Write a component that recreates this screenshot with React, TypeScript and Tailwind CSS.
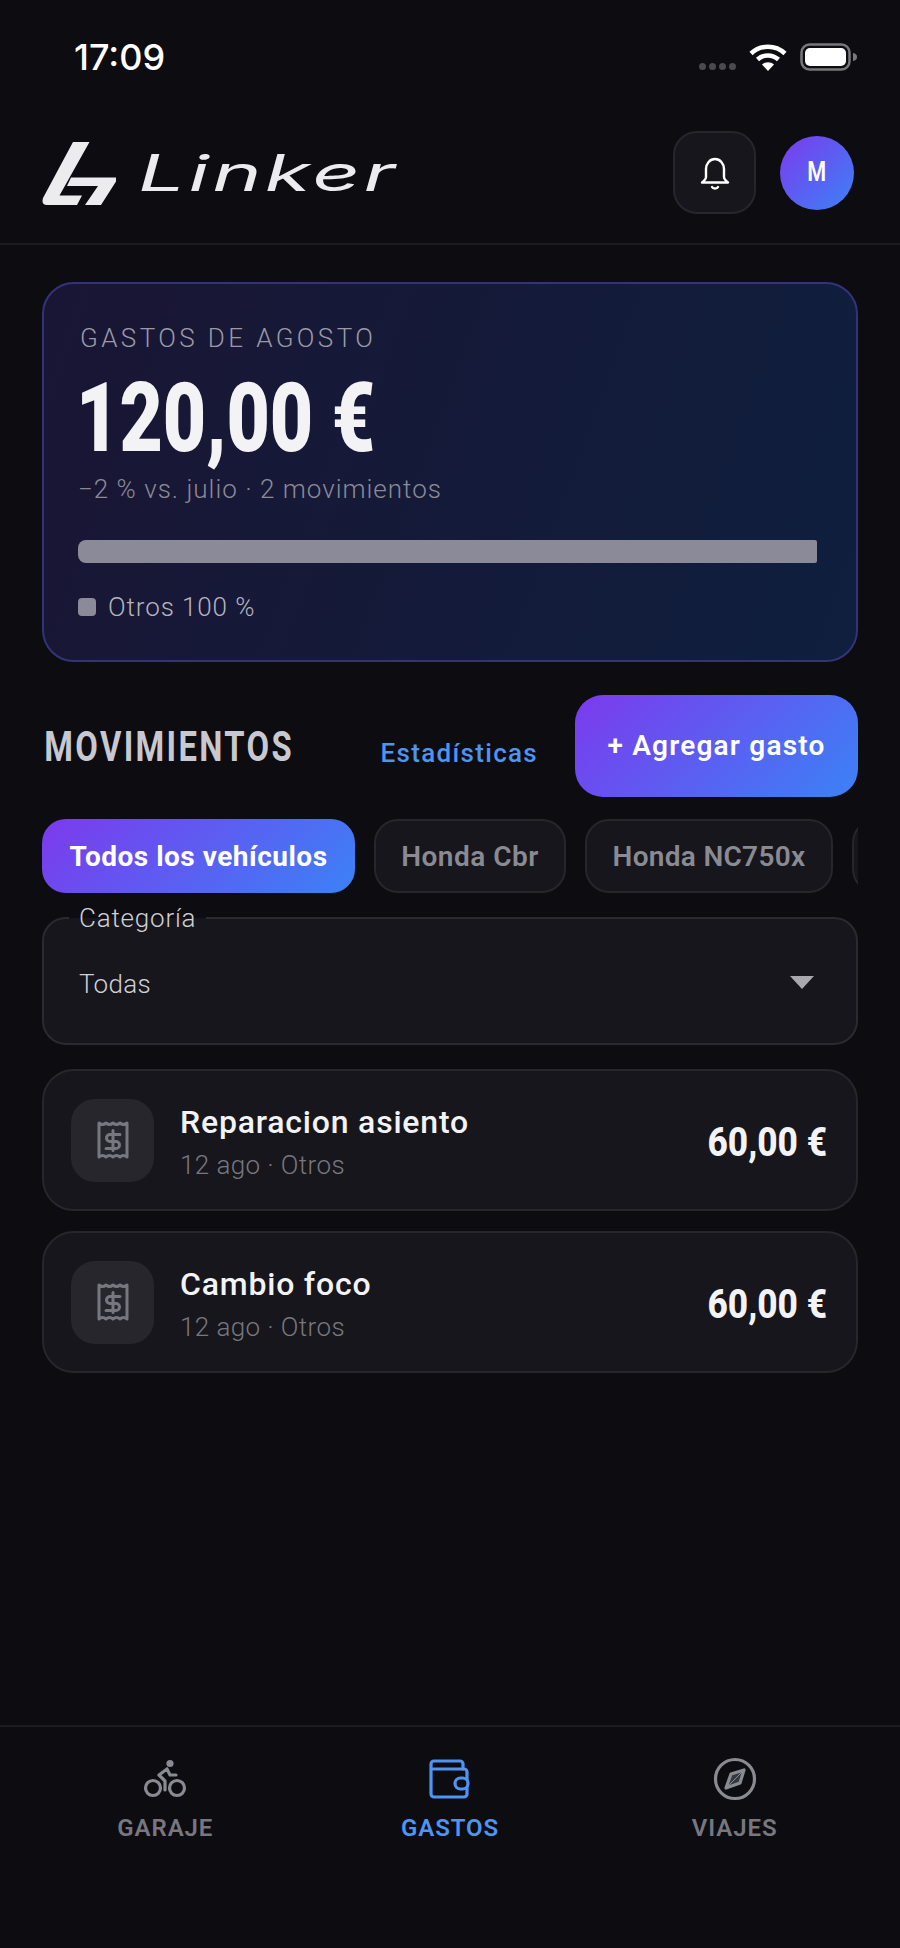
import React from "react";

function Wifi() {
  return (
    <svg width="38" height="28" viewBox="0 0 38 28" fill="none">
      <path d="M2 10.500C11.500 1.500 26.500 1.500 36 10.500" stroke="#fff" strokeWidth="4.500" />
      <path d="M8.500 16.500C14.500 11 23.500 11 29.500 16.500" stroke="#fff" strokeWidth="4.500" />
      <path d="M13 21.500C16.500 18.500 21.500 18.500 25 21.500L19 28Z" fill="#fff" />
    </svg>
  );
}

function Battery() {
  return (
    <svg width="58" height="28" viewBox="0 0 58 28" fill="none">
      <rect x="1.500" y="1.500" width="48" height="25" rx="8" stroke="#77777c" strokeWidth="2.500" />
      <rect x="5" y="5" width="41" height="18" rx="5" fill="#fff" />
      <path d="M53 10c3 .6 4 2 4 4s-1 3.400-4 4z" fill="#77777c" />
    </svg>
  );
}

function Bell() {
  return (
    <svg width="32" height="36" viewBox="0 0 32 36" fill="none" stroke="#fff" strokeWidth="2.400" strokeLinejoin="round" strokeLinecap="round">
      <path d="M7 14a9 10 0 0 1 18 0v8c0 2 1.500 3.500 4 5.500H3c2.500-2 4-3.500 4-5.500z" />
      <path d="M13 32c1 2 5 2 6 0" />
    </svg>
  );
}

function Logo() {
  return (
    <svg width="76" height="66" viewBox="12 20 76 66" fill="#ececee">
      <path d="M43 22H59.500L29.500 75.500H52L47 85H17Q11 85 13 78Z" />
      <path d="M41 57.500H86V61.500L71 85H55L68 66H37Z" />
    </svg>
  );
}

function Receipt() {
  return (
    <svg width="32" height="38" viewBox="0 0 32 38" fill="none" stroke="#77777f" strokeWidth="3" strokeLinejoin="round" strokeLinecap="round">
      <path d="M2 2c2.300 2 4.700 2 7 0 2.300 2 4.700 2 7 0 2.300 2 4.700 2 7 0 2.300 2 4.700 2 7 0v34c-2.300-2-4.700-2-7 0-2.300-2-4.700-2-7 0-2.300-2-4.700-2-7 0-2.300-2-4.700-2-7 0z" />
      <path d="M23 13.500h-10a3.500 3.500 0 0 0 0 7h6a3.500 3.500 0 0 1 0 7h-10M16 9.500v20" />
    </svg>
  );
}

function Bike() {
  return (
    <svg width="44" height="40" viewBox="0 0 44 40" fill="none" stroke="#8a8a92" strokeWidth="3.200" strokeLinecap="round" strokeLinejoin="round">
      <circle cx="27" cy="4.500" r="3.600" fill="#8a8a92" stroke="none" />
      <circle cx="10" cy="29" r="7.500" />
      <circle cx="34" cy="29" r="7.500" />
      <path d="M24 10l-8 6 6 6v9M24 10l3 6h6" />
    </svg>
  );
}

function WalletIcon() {
  return (
    <svg width="42" height="40" viewBox="0 0 42 40" fill="none" stroke="#4f94f3" strokeWidth="3.200" strokeLinejoin="round">
      <path d="M5 2h26a3 3 0 0 1 3 3v5h1a3 3 0 0 1 3 3v22a3 3 0 0 1-3 3H5a3 3 0 0 1-3-3V5a3 3 0 0 1 3-3z" />
      <path d="M2 10h33" />
      <rect x="26" y="19" width="13" height="11" rx="5.500" fill="#0c0c11" />
    </svg>
  );
}

function Compass() {
  return (
    <svg width="44" height="44" viewBox="0 0 44 44" fill="none" stroke="#8a8a92" strokeWidth="3.200" strokeLinejoin="round">
      <circle cx="22" cy="22" r="19.500" />
      <path d="M31 13l-4 13-14 5 5-14z" fill="#8a8a92" fillOpacity="0.35" />
      <path d="M31 13L13 31" strokeWidth="1" />
    </svg>
  );
}

function Row({ title }: { title: string }) {
  return (
    <div className="h-[142px] rounded-[32px] border-2 border-[#26262c] bg-[#16161c] pl-[27px] pr-[29px] flex items-center">
      <div className="w-[83px] h-[83px] rounded-[24px] bg-[#26262c] flex items-center justify-center shrink-0">
        <Receipt />
      </div>
      <div className="ml-[26px] flex-1 pt-[4px]">
        <div className="text-[32px] leading-[40px] font-medium tracking-[0.8px] text-[#f3f3f6]">{title}</div>
        <div className="text-[26px] leading-[34px] mt-[6px] font-light tracking-[0.4px] text-[#77777f]">12 ago · Otros</div>
      </div>
      <div className="text-[41px] leading-[50px] font-extrabold text-[#f3f3f6] origin-right scale-x-[0.86] pt-[3px]">60,00 €</div>
    </div>
  );
}

function NavItem({ icon, label, active }: { icon: React.ReactNode; label: string; active?: boolean }) {
  return (
    <div className="flex-1 flex flex-col items-center">
      <div className="h-[44px] flex items-center justify-center">{icon}</div>
      <div className={`mt-[12px] text-[24px] leading-[30px] font-semibold tracking-[0.9px] ${active ? "text-[#4f94f3]" : "text-[#77777f]"}`}>{label}</div>
    </div>
  );
}

export default function App() {
  return (
    <div className="w-[900px] min-h-[1948px] bg-[#0c0c11] flex flex-col font-['Roboto',sans-serif] overflow-hidden">
      <div className="h-[114px] px-[42px] pt-[37px] flex items-start justify-between">
        <div className="pl-[32px] font-['Inter',sans-serif] text-[36px] leading-[40px] font-medium text-white">17:09</div>
        <div className="flex items-start pt-[6px]">
          <div className="flex gap-[3px] mt-[20px] mr-[13px]">
            <div className="w-[7px] h-[7px] rounded-full bg-[#4a4a50]" />
            <div className="w-[7px] h-[7px] rounded-full bg-[#4a4a50]" />
            <div className="w-[7px] h-[7px] rounded-full bg-[#4a4a50]" />
            <div className="w-[7px] h-[7px] rounded-full bg-[#4a4a50]" />
          </div>
          <Wifi />
          <div className="ml-[13px]"><Battery /></div>
        </div>
      </div>

      <div className="h-[131px] px-[42px] pb-[12px] border-b-2 border-[#1c1c22] flex items-center justify-between">
        <div className="flex items-center">
          <Logo />
          <span className="ml-[20px] inline-block origin-left scale-x-[1.67] font-['Inter',sans-serif] italic text-[50px] leading-[60px] font-normal tracking-[2px] text-[#ececee]">Linker</span>
        </div>
        <div className="flex items-center gap-[24px] pr-[4px]">
          <div className="w-[83px] h-[83px] rounded-[24px] bg-[#16161c] border-2 border-[#26262c] flex items-center justify-center"><Bell /></div>
          <div className="w-[74px] h-[74px] rounded-full bg-linear-[135deg,#7c3aed,#3b82f6] flex items-center justify-center text-white">
            <span className="inline-block scale-x-[0.8] text-[27px] font-semibold">M</span>
          </div>
        </div>
      </div>

      <div className="flex-1 px-[42px] pt-[37px]">
        <div className="h-[380px] rounded-[32px] border-2 border-[#33337a] bg-linear-[110deg,#1a1534,#0f1f3e] pl-[34px] pr-[39px] pt-[38px]">
          <div className="pl-[2px] text-[26px] leading-[32px] font-light tracking-[3.4px] text-[#9a9aa6]">GASTOS DE AGOSTO</div>
          <div className="mt-[16px] -ml-[2px] origin-left scale-x-[0.78] text-[96px] leading-[96px] font-black text-[#f3f3f6]">120,00 €</div>
          <div className="mt-[6px] text-[26px] leading-[34px] font-light text-[#8a8a94] tracking-[1px]">−2 % vs. julio · 2 movimientos</div>
          <div className="mt-[34px] h-[23px] rounded-l-[8px] rounded-r-[2px] bg-[#8a8a98]" />
          <div className="mt-[27px] flex items-center gap-[12px]">
            <div className="w-[18px] h-[18px] rounded-[4px] bg-[#8a8a98]" />
            <div className="text-[26px] leading-[34px] font-light tracking-[0.9px] text-[#b4b4bc]">Otros 100 %</div>
          </div>
        </div>

        <div className="mt-[33px] flex items-center justify-between">
          <div className="pl-[3px] origin-left scale-x-[0.78] text-[42px] font-bold tracking-[3px] text-[#c8c8d0]">MOVIMIENTOS</div>
          <div className="flex items-center gap-[37px]">
            <div className="pt-[14px] text-[26px] font-medium tracking-[1.3px] text-[#4f94f3]">Estadísticas</div>
            <div className="w-[283px] h-[102px] rounded-[28px] bg-linear-[135deg,#7c3aed,#3b82f6] flex items-center justify-center text-[28px] font-semibold tracking-[1.2px] text-white">+ Agregar gasto</div>
          </div>
        </div>

        <div className="mt-[22px] flex gap-[19px] overflow-hidden">
          <div className="shrink-0 w-[313px] h-[74px] pt-[2px] rounded-[24px] bg-linear-[135deg,#7c3aed,#3b82f6] flex items-center justify-center text-[28px] font-bold tracking-[0.5px] text-white">Todos los vehículos</div>
          <div className="shrink-0 w-[192px] h-[74px] pt-[2px] rounded-[24px] bg-[#16161c] border-2 border-[#26262c] flex items-center justify-center text-[28px] font-semibold tracking-[0.5px] text-[#8a8a92]">Honda Cbr</div>
          <div className="shrink-0 w-[248px] h-[74px] pt-[2px] rounded-[24px] bg-[#16161c] border-2 border-[#26262c] flex items-center justify-center text-[28px] font-semibold tracking-[0.3px] text-[#8a8a92]">Honda NC750x</div>
          <div className="shrink-0 w-[200px] h-[74px] rounded-[24px] bg-[#16161c] border-2 border-[#26262c]" />
        </div>

        <div className="relative mt-[24px] h-[128px] rounded-[24px] border-2 border-[#2a2a30] bg-[#16161c] pl-[35px] pr-[42px] pt-[2px] flex items-center justify-between">
          <div className="absolute left-[25px] -top-[18px] px-[10px] bg-linear-to-b from-[#0c0c11] from-50% to-[#16161c] to-50% text-[26px] leading-[34px] font-light tracking-[0.8px] text-[#d0d0d6]">Categoría</div>
          <div className="pt-[3px] text-[26px] leading-[34px] font-light tracking-[0.3px] text-[#d0d0d6]">Todas</div>
          <div className="w-0 h-0 border-l-[12px] border-r-[12px] border-t-[13px] border-l-transparent border-r-transparent border-t-[#a8a8ae]" />
        </div>

        <div className="mt-[24px] flex flex-col gap-[20px]">
          <Row title="Reparacion asiento" />
          <Row title="Cambio foco" />
        </div>
      </div>

      <div className="h-[223px] border-t-2 border-[#1c1c22] px-[23px] pt-[30px] flex items-start">
        <NavItem icon={<Bike />} label="GARAJE" />
        <NavItem icon={<WalletIcon />} label="GASTOS" active />
        <NavItem icon={<Compass />} label="VIAJES" />
      </div>
    </div>
  );
}
